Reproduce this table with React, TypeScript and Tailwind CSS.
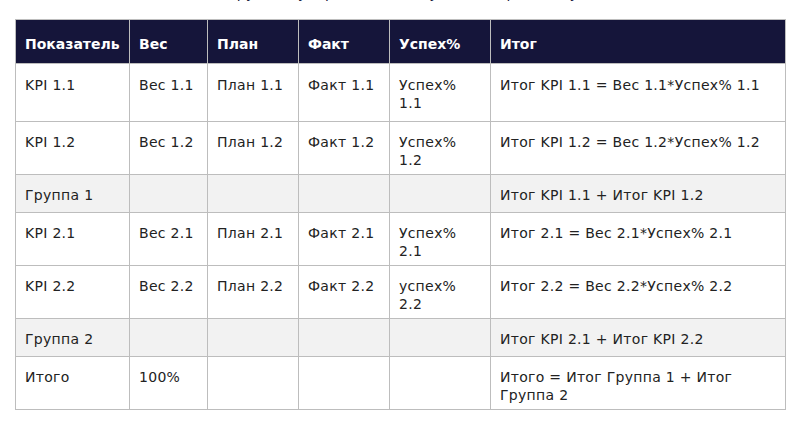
import React from 'react';

type Row = {
  cells: string[];
  group?: boolean;
};

const headers = ['Показатель', 'Вес', 'План', 'Факт', 'Успех%', 'Итог'];

const rows: Row[] = [
  { cells: ['KPI 1.1', 'Вес 1.1', 'План 1.1', 'Факт 1.1', 'Успех% 1.1', 'Итог KPI 1.1 = Вес 1.1*Успех% 1.1'] },
  { cells: ['KPI 1.2', 'Вес 1.2', 'План 1.2', 'Факт 1.2', 'Успех% 1.2', 'Итог KPI 1.2 = Вес 1.2*Успех% 1.2'] },
  { cells: ['Группа 1', '', '', '', '', 'Итог KPI 1.1 + Итог KPI 1.2'], group: true },
  { cells: ['KPI 2.1', 'Вес 2.1', 'План 2.1', 'Факт 2.1', 'Успех% 2.1', 'Итог 2.1 = Вес 2.1*Успех% 2.1'] },
  { cells: ['KPI 2.2', 'Вес 2.2', 'План 2.2', 'Факт 2.2', 'успех% 2.2', 'Итог 2.2 = Вес 2.2*Успех% 2.2'] },
  { cells: ['Группа 2', '', '', '', '', 'Итог KPI 2.1 + Итог KPI 2.2'], group: true },
  { cells: ['Итого', '100%', '', '', '', 'Итого = Итог Группа 1 + Итог Группа 2'] },
];

const colWidths = ['w-[114px]', 'w-[78px]', 'w-[91px]', 'w-[91px]', 'w-[101px]', 'w-[295px]'];

const App: React.FC = () => {
  return (
    <div className="min-h-screen bg-white px-[15px] font-['DejaVu_Sans',Verdana,sans-serif] text-[14px] leading-[18px] tracking-[0.3px] text-[#222]">
      {/* intro line, mostly scrolled off the top */}
      <p className="-mt-[16px] mb-[17px] text-[#15153a] whitespace-nowrap">
        Расчёт итоговой оценки по группам упорядочен следующим образом: сумма итогов KPI.
      </p>

      <table className="w-[770px] table-fixed border-collapse">
        <colgroup>
          {colWidths.map((w, i) => (
            <col key={i} className={w} />
          ))}
        </colgroup>
        <thead>
          <tr className="bg-[#15153a]">
            {headers.map(h => (
              <th
                key={h}
                className="border border-[#bdbdbd] px-[9px] pt-[15px] pb-[10px] text-left align-top font-bold tracking-normal text-white"
              >
                {h}
              </th>
            ))}
          </tr>
        </thead>
        <tbody>
          {rows.map((row, ri) => (
            <tr key={ri} className={row.group ? 'bg-[#f2f2f2]' : 'bg-white'}>
              {row.cells.map((c, ci) => (
                <td
                  key={ci}
                  className={`border border-[#bdbdbd] px-[9px] align-top ${
                    ri === 0 ? 'pt-[12px] pb-[9px]' : row.group ? 'pt-[11px] pb-[8px]' : 'pt-[11px] pb-[5px]'
                  }`}
                >
                  {c}
                </td>
              ))}
            </tr>
          ))}
        </tbody>
      </table>
    </div>
  );
};

export default App;
